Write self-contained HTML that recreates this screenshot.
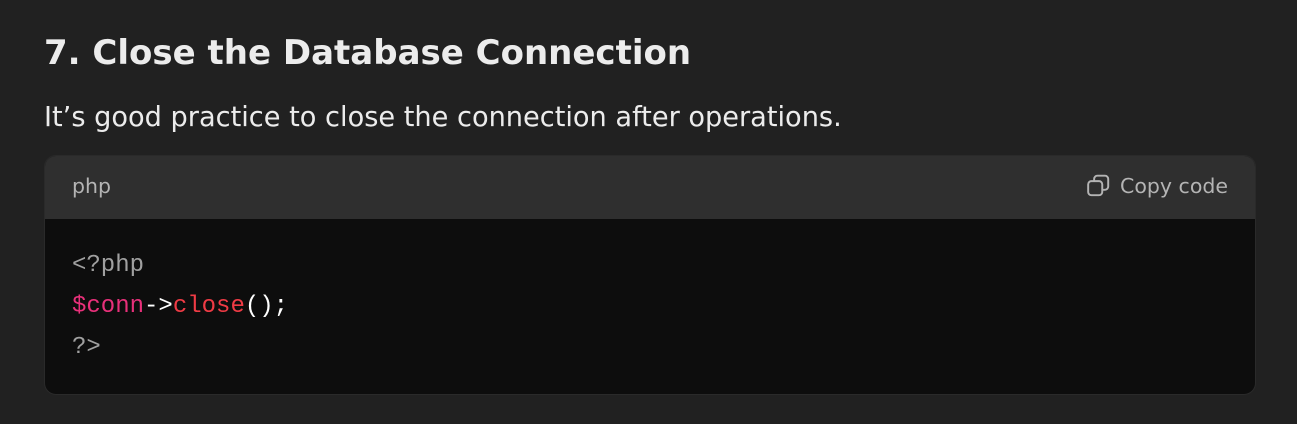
<!DOCTYPE html>
<html><head><style>
body{margin:0;background:#212121;width:1297px;height:424px;overflow:hidden;font-family:"DejaVu Sans","Liberation Sans",sans-serif;color:#ececec}
h3{position:absolute;left:44px;top:30px;margin:0;font-size:34px;font-weight:bold;line-height:46px;color:#ececec}
p{position:absolute;left:44px;top:98px;margin:0;font-size:27.2px;line-height:40px;color:#ececec}
.cb{position:absolute;left:44px;top:155px;width:1212px;height:240px;border-radius:12px;overflow:hidden;background:#0d0d0d;border:1px solid #2a2a2a;box-sizing:border-box}
.hd{height:63px;background:#2f2f2f;position:relative;font-size:20.5px;color:#b4b4b4}
.lang{position:absolute;left:27px;top:18px}
.copy{position:absolute;right:27px;top:17px;display:flex;align-items:center;gap:8px}
pre{margin:0;position:absolute;left:27px;top:89px;font-family:"Liberation Mono",monospace;font-size:24px;line-height:41px;color:#fff}
.g{color:#a0a0a0}.m{color:#e8307a}.r{color:#ef3b45}
</style></head><body>
<h3>7. Close the Database Connection</h3>
<p>It’s good practice to close the connection after operations.</p>
<div class="cb">
<div class="hd"><span class="lang">php</span>
<span class="copy"><svg width="26" height="26" viewBox="0 0 24 24" fill="none" stroke="#b4b4b4" stroke-width="1.8"><rect x="2" y="7.5" width="13" height="13" rx="3"/><path d="M7.5 7.5V5.5a3 3 0 0 1 3-3h7a3 3 0 0 1 3 3v7a3 3 0 0 1-3 3h-2.5"/></svg>Copy code</span></div>
<pre><span class="g">&lt;?php</span>
<span class="m">$conn</span>-&gt;<span class="r">close</span>();
<span class="g">?&gt;</span></pre>
</div>
</body></html>
